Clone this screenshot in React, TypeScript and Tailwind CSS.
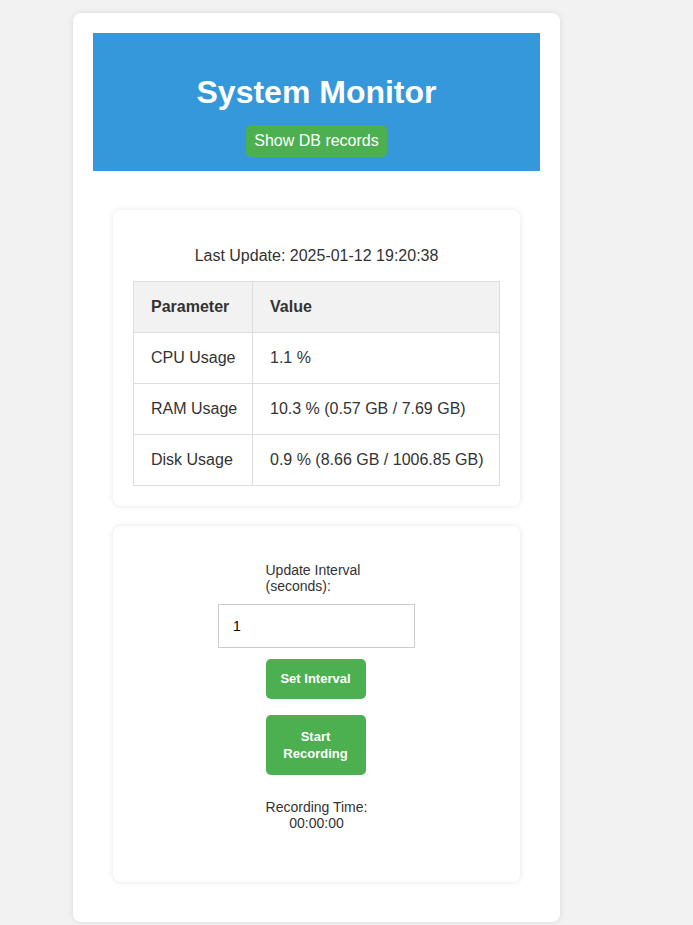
import { useState } from 'react';

const rows = [
  { param: 'CPU Usage', value: '1.1 %' },
  { param: 'RAM Usage', value: '10.3 % (0.57 GB / 7.69 GB)' },
  { param: 'Disk Usage', value: '0.9 % (8.66 GB / 1006.85 GB)' },
];

export default function App() {
  const [interval, setIntervalValue] = useState('1');

  return (
    <div className="min-h-[925px] bg-[#f2f2f2] pt-[13px] pl-[73px] text-[#333] font-['Liberation_Sans',Arial,sans-serif]">
      <div className="w-[487px] rounded-lg bg-white p-[20px] shadow-[0_0_6px_rgba(0,0,0,0.1)]">
        {/* Header */}
        <div className="flex flex-col items-center bg-[#3498db] pt-[41px] pb-[14px]">
          <h1 className="text-[32px] leading-[37px] font-bold text-white">System Monitor</h1>
          <button className="mt-[14px] rounded-[5px] bg-[#4caf50] px-[8px] py-[7px] text-[16px] leading-[18px] text-white">
            Show DB records
          </button>
        </div>

        <div className="flex flex-col gap-[20px] px-[20px] pt-[39px] pb-[20px]">
          {/* Stats card */}
          <div className="rounded-lg bg-white px-[20px] pt-[21px] pb-[20px] shadow-[0_0_6px_rgba(0,0,0,0.1)]">
            <p className="my-[16px] text-center text-[16px] leading-[18px]">Last Update: 2025-01-12 19:20:38</p>
            <table className="w-full table-fixed border-collapse text-left text-[16px] leading-[18px] whitespace-nowrap">
              <thead>
                <tr className="bg-[#f2f2f2]">
                  <th className="w-[119px] border border-[#ddd] px-[17px] py-[16px] font-bold">Parameter</th>
                  <th className="border border-[#ddd] pl-[17px] py-[16px] font-bold">Value</th>
                </tr>
              </thead>
              <tbody>
                {rows.map((r) => (
                  <tr key={r.param}>
                    <td className="border border-[#ddd] px-[17px] py-[16px]">{r.param}</td>
                    <td className="border border-[#ddd] pl-[17px] py-[16px]">{r.value}</td>
                  </tr>
                ))}
              </tbody>
            </table>
          </div>

          {/* Controls card */}
          <div className="flex flex-col items-center rounded-lg bg-white px-[20px] pt-[36px] pb-[51px] text-[14px] leading-[16px] shadow-[0_0_6px_rgba(0,0,0,0.1)]">
            <label className="ml-[-2px] w-[100px] text-left">Update Interval (seconds):</label>
            <input
              value={interval}
              onChange={(e) => setIntervalValue(e.target.value)}
              className="mt-[10px] h-[44px] w-[197px] border border-[#ccc] px-[14px] text-[14px] text-black outline-none"
            />
            <button className="mt-[11px] ml-[-2px] w-[100px] rounded-[5px] bg-[#4caf50] py-[12px] text-[13px] leading-[16px] font-bold text-white">
              Set Interval
            </button>
            <button className="mt-[16px] ml-[-2px] w-[100px] rounded-[5px] bg-[#4caf50] px-[10px] py-[13px] text-[13px] leading-[17px] font-bold text-white">
              Start Recording
            </button>
            <div className="mt-[24px] w-[110px] text-center">Recording Time: 00:00:00</div>
          </div>
        </div>
      </div>
    </div>
  );
}
